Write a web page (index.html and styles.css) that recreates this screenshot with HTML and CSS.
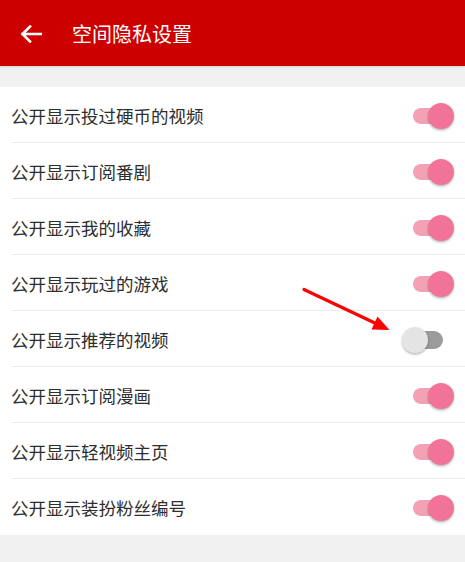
FILE: index.html
```html
<!DOCTYPE html>
<html lang="zh-CN">
<head>
<meta charset="utf-8">
<title>空间隐私设置</title>
<link rel="stylesheet" href="styles.css">
</head>
<body>
<div class="page">
  <header class="appbar">
    <svg class="back" width="22" height="18" viewBox="0 0 22 18">
      <path d="M21 9H2.5M10 1.5L2.5 9L10 16.5" fill="none" stroke="#fff" stroke-width="2.6" stroke-linecap="square" stroke-linejoin="miter"/>
    </svg>
    <h1 class="title">空间隐私设置</h1>
  </header>
  <div class="spacer"></div>
  <ul class="list">
    <li class="row"><span class="label">公开显示投过硬币的视频</span><span class="switch on"><span class="track"></span><span class="thumb"></span></span></li>
    <li class="row"><span class="label">公开显示订阅番剧</span><span class="switch on"><span class="track"></span><span class="thumb"></span></span></li>
    <li class="row"><span class="label">公开显示我的收藏</span><span class="switch on"><span class="track"></span><span class="thumb"></span></span></li>
    <li class="row"><span class="label">公开显示玩过的游戏</span><span class="switch on"><span class="track"></span><span class="thumb"></span></span></li>
    <li class="row"><span class="label">公开显示推荐的视频</span><span class="switch off"><span class="track"></span><span class="thumb"></span></span></li>
    <li class="row"><span class="label">公开显示订阅漫画</span><span class="switch on"><span class="track"></span><span class="thumb"></span></span></li>
    <li class="row"><span class="label">公开显示轻视频主页</span><span class="switch on"><span class="track"></span><span class="thumb"></span></span></li>
    <li class="row"><span class="label">公开显示装扮粉丝编号</span><span class="switch on"><span class="track"></span><span class="thumb"></span></span></li>
  </ul>
  <svg class="annot" width="465" height="562" viewBox="0 0 465 562">
    <line x1="304" y1="289.5" x2="378" y2="324.5" stroke="#f00" stroke-width="3.2" stroke-linecap="round"/>
    <polygon points="389.5,330 371.5,329.5 377.5,316.5" fill="#f00"/>
  </svg>
</div>
</body>
</html>
```

FILE: styles.css
```css
* { box-sizing: border-box; }
html, body { margin: 0; padding: 0; }
body {
  background: #f1f1f1;
  font-family: "Noto Sans CJK SC", "Noto Sans", sans-serif;
  width: 465px;
  height: 562px;
  overflow: hidden;
}
.page { position: relative; width: 465px; height: 562px; }
.appbar {
  height: 66px;
  background: #cd0000;
  display: flex;
  align-items: center;
  padding-left: 20px;
  box-shadow: 0 1px 2px rgba(0,0,0,0.12);
  position: relative;
  z-index: 1;
}
.back { display: block; margin-top: 2px; }
.title {
  margin: 0 0 0 30px;
  font-size: 20px;
  font-weight: normal;
  color: #fff;
  line-height: 1;
  padding-top: 1px;
}
.spacer { height: 21px; }
.list {
  list-style: none;
  margin: 0;
  padding: 0 0 0 11px;
  background: #fff;
}
.row {
  height: 56px;
  display: flex;
  align-items: center;
  justify-content: space-between;
  border-bottom: 1px solid #ececec;
  padding-top: 2px;
}
.row:last-child { border-bottom: none; }
.label {
  font-size: 17.5px;
  color: #2e2e2e;
  line-height: 1;
}
.switch {
  position: relative;
  width: 42px;
  height: 26px;
  margin-right: 11px;
}
.switch .track {
  position: absolute;
  left: 1px;
  top: 5px;
  width: 38px;
  height: 16px;
  border-radius: 8px;
}
.switch .thumb {
  position: absolute;
  top: 0;
  width: 26px;
  height: 26px;
  border-radius: 50%;
  box-shadow: 0 1.5px 2.5px rgba(0,0,0,0.28);
}
.switch.on .track { background: #f3a1b4; }
.switch.on .thumb { left: 16px; background: #f27398; }
.switch.off { margin-right: 21px; }
.switch.off .track { background: #9b9b9b; left: 3px; top: 4px; height: 18px; border-radius: 9px; }
.switch.off .thumb { left: 0; background: #e4e4e4; }
.annot { position: absolute; left: 0; top: 0; pointer-events: none; }
```
